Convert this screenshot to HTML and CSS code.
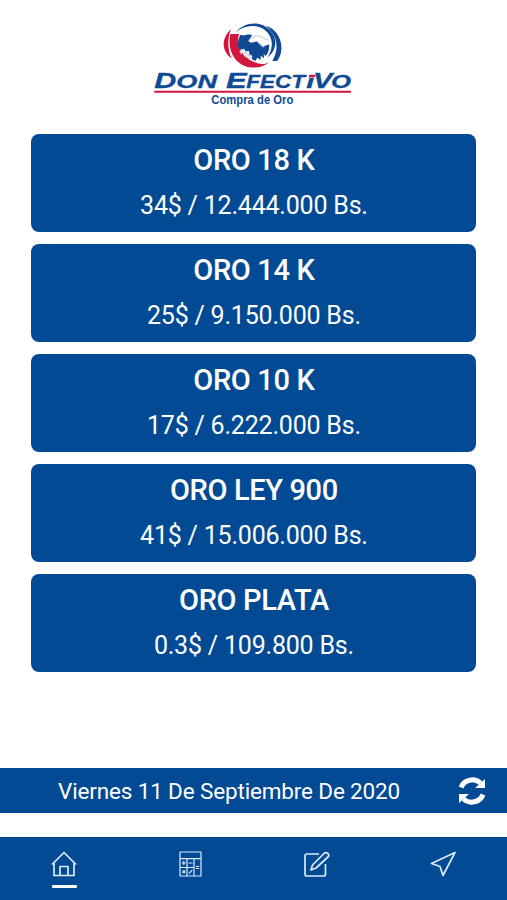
FILE: index.html
```html
<!DOCTYPE html>
<html lang="es">
<head>
  <meta charset="UTF-8">
  <meta name="viewport" content="width=device-width, initial-scale=1.0">
  <title>Don Efectivo</title>
  <link rel="stylesheet" href="styles.css">
</head>
<body>
  <header class="header">
    <svg class="logo" viewBox="0 0 645 300" role="img" aria-label="Don Efectivo">
      <!-- emblem -->
      <path class="red" d="M258 43C228 70 229 108 260 131C248 104 246 72 258 43Z"/>
      <path class="red" d="M256 57H282C274 88 287 122 322 139C344 150 360 149 373 141C345 166 300 162 275 137C254 115 250 82 256 57Z"/>
      <path class="blue" d="M272 52C300 18 351 17 377 48C401 77 392 109 366 129C387 99 385 67 362 47C338 27 300 28 272 52Z"/>
      <path class="blue" d="M362 32C407 44 424 105 396 138H382C404 100 398 62 362 32Z"/>
      <!-- hands -->
      <path class="blue" d="M286 59C299 65 307 54 322 61L310 77C316 86 325 82 334 79L352 96L372 88C374 104 369 116 361 123L356 116L357 130L347 122L347 135L337 128L331 138L320 132L322 122L313 118L312 108L301 109L297 101L287 104L279 96C278 82 281 70 286 59Z"/>
      <path class="hand" d="M315 76L330 63C343 60 354 70 372 76M336 78L358 98"/>
      <path class="fingers" d="M284 110l7-8 5 7-7 9ZM295 118l8-8 4 7-7 9ZM307 126l6-7 5 6-6 7Z"/>
      <!-- wordmark -->
      <g class="wordmark">
        <text class="cap" x="28" y="220" textLength="66" lengthAdjust="spacingAndGlyphs">D</text>
        <text class="small" x="94" y="220" textLength="122" lengthAdjust="spacingAndGlyphs">ON</text>
        <text class="cap" x="243" y="220" textLength="62" lengthAdjust="spacingAndGlyphs">E</text>
        <text class="small" x="304" y="220" textLength="176" lengthAdjust="spacingAndGlyphs">FECT</text>
        <text class="small" x="484" y="220" textLength="24" lengthAdjust="spacingAndGlyphs">ı</text>
        <text class="cap" x="504" y="220" textLength="58" lengthAdjust="spacingAndGlyphs">V</text>
        <text class="small" x="558" y="220" textLength="60" lengthAdjust="spacingAndGlyphs">O</text>
      </g>
      <path class="red" d="M493 179H512L509 187H490Z"/>
      <path class="red" d="M28 227H618V233H28Z"/>
      <text class="tagline" x="199" y="266" textLength="246" lengthAdjust="spacingAndGlyphs">Compra de Oro</text>
    </svg>
  </header>

  <main class="prices">
    <div class="card">
      <h2>ORO 18 K</h2>
      <p>34$ / 12.444.000 Bs.</p>
    </div>
    <div class="card">
      <h2>ORO 14 K</h2>
      <p>25$ / 9.150.000 Bs.</p>
    </div>
    <div class="card">
      <h2>ORO 10 K</h2>
      <p>17$ / 6.222.000 Bs.</p>
    </div>
    <div class="card">
      <h2>ORO LEY 900</h2>
      <p>41$ / 15.006.000 Bs.</p>
    </div>
    <div class="card">
      <h2>ORO PLATA</h2>
      <p>0.3$ / 109.800 Bs.</p>
    </div>
  </main>

  <div class="date-bar">
    <span class="date">Viernes 11 De Septiembre De 2020</span>
    <button class="refresh" aria-label="Actualizar">
      <svg viewBox="0 0 28 30">
        <path class="arc" d="M3 11.500A12 11.500 0 0 1 22.500 7M25 18.500A12 11.500 0 0 1 5.500 23"/>
        <path class="head" d="M27 3V12H17ZM1 27V18H11Z"/>
      </svg>
    </button>
  </div>

  <nav class="tabs">
    <a class="tab active" href="#" aria-label="Inicio">
      <svg viewBox="0 0 26 26">
        <path d="M1 13.500L13 1.500L25 13.500M3 11.500V24.500H23V11.500M9 24.500V15.500H17V24.500"/>
      </svg>
    </a>
    <a class="tab" href="#" aria-label="Calculadora">
      <svg class="calc" viewBox="0 0 26 26">
        <path d="M2 1H23V25H2ZM2 7.700H23M9 7.700V25M16 7.700V25M2 16.500H16"/>
        <path d="M3.800 12H7.800M5.800 10V14M10.500 12H14.500M4.500 19.500L7.200 22.200M7.200 19.500L4.500 22.200M11 22.500L14.200 19.200M17.800 15.500H21.200M17.800 17.500H21.200"/>
      </svg>
    </a>
    <a class="tab" href="#" aria-label="Editar">
      <svg viewBox="0 0 26 26">
        <path d="M15 3H3Q1 3 1 5V23Q1 25 3 25H19.500Q21.500 25 21.500 23V13M7 19L8.500 14L20 2.500Q22 .800 24 2.500Q25.500 4.300 24 6L12 17Z"/>
      </svg>
    </a>
    <a class="tab" href="#" aria-label="Ubicación">
      <svg viewBox="0 0 26 26">
        <path d="M25 1.500L1.500 12.500L10 15.500L13 24.500Z"/>
      </svg>
    </a>
  </nav>
</body>
</html>
```

FILE: styles.css
```css
* {
  box-sizing: border-box;
}
body {
  display: flex;
  flex-direction: column;
  height: 900px;
  margin: 0;
  background-color: #fff;
  color: #fff;
  font-family: Roboto, sans-serif;
  overflow: hidden;
}
.header {
  height: 134px;
  padding: 15px 0 0 145px;
}
.logo {
  display: block;
  width: 215px;
  height: 100px;
}
.red {
  fill: #d3163f;
}
.blue,
.wordmark,
.tagline {
  fill: #104a94;
}
.hand {
  fill: none;
  stroke: #b9c4dc;
  stroke-width: 3;
}
.fingers {
  fill: #fff;
  stroke: #a58fb8;
  stroke-width: 2;
}
.wordmark {
  font-family: "Liberation Sans", Arial, sans-serif;
  font-style: italic;
  font-weight: bold;
  stroke: #104a94;
  stroke-width: 1;
}
.cap {
  font-size: 66px;
}
.small {
  font-size: 54px;
}
.tagline {
  font-family: "Liberation Sans", Arial, sans-serif;
  font-size: 36px;
  font-weight: bold;
}
.prices {
  display: flex;
  flex-direction: column;
  gap: 12px;
  padding: 0 30.600px 0 31.400px;
}
.card {
  height: 98px;
  padding-top: 8px;
  background-color: #034a94;
  border-radius: 8px;
  text-align: center;
}
.card h2 {
  margin: 0;
  font-size: 29px;
  font-weight: 500;
  line-height: 36px;
  letter-spacing: -0.350px;
}
.card p {
  margin: 10px 0 0;
  font-size: 25px;
  line-height: 35px;
  letter-spacing: -0.200px;
}
.date-bar {
  display: flex;
  align-items: center;
  height: 45px;
  margin-top: auto;
  padding: 0 21px 0 58px;
  background-color: #034a94;
}
.date {
  flex: 1;
  font-size: 22.500px;
  letter-spacing: -0.150px;
}
.refresh {
  width: 28px;
  height: 30px;
  padding: 0;
  border: none;
  background: none;
}
.refresh svg {
  display: block;
}
.arc {
  fill: none;
  stroke: #fff;
  stroke-width: 5;
}
.head {
  fill: #fff;
}
.tabs {
  display: grid;
  grid-template-columns: repeat(4, 126.400px);
  height: 63px;
  margin-top: 24px;
  padding-left: 1px;
  background-color: #034a94;
}
.tab {
  display: flex;
  flex-direction: column;
  align-items: center;
  padding-top: 14px;
}
.tab svg {
  width: 26px;
  height: 26px;
  fill: none;
  stroke: #dceafa;
  stroke-width: 1.700;
  stroke-linejoin: round;
}
.tab .calc {
  stroke-width: 1.200;
}
.active::after {
  content: "";
  width: 25px;
  height: 3px;
  margin-top: 8px;
  background-color: #fff;
  border-radius: 1px;
}
```
